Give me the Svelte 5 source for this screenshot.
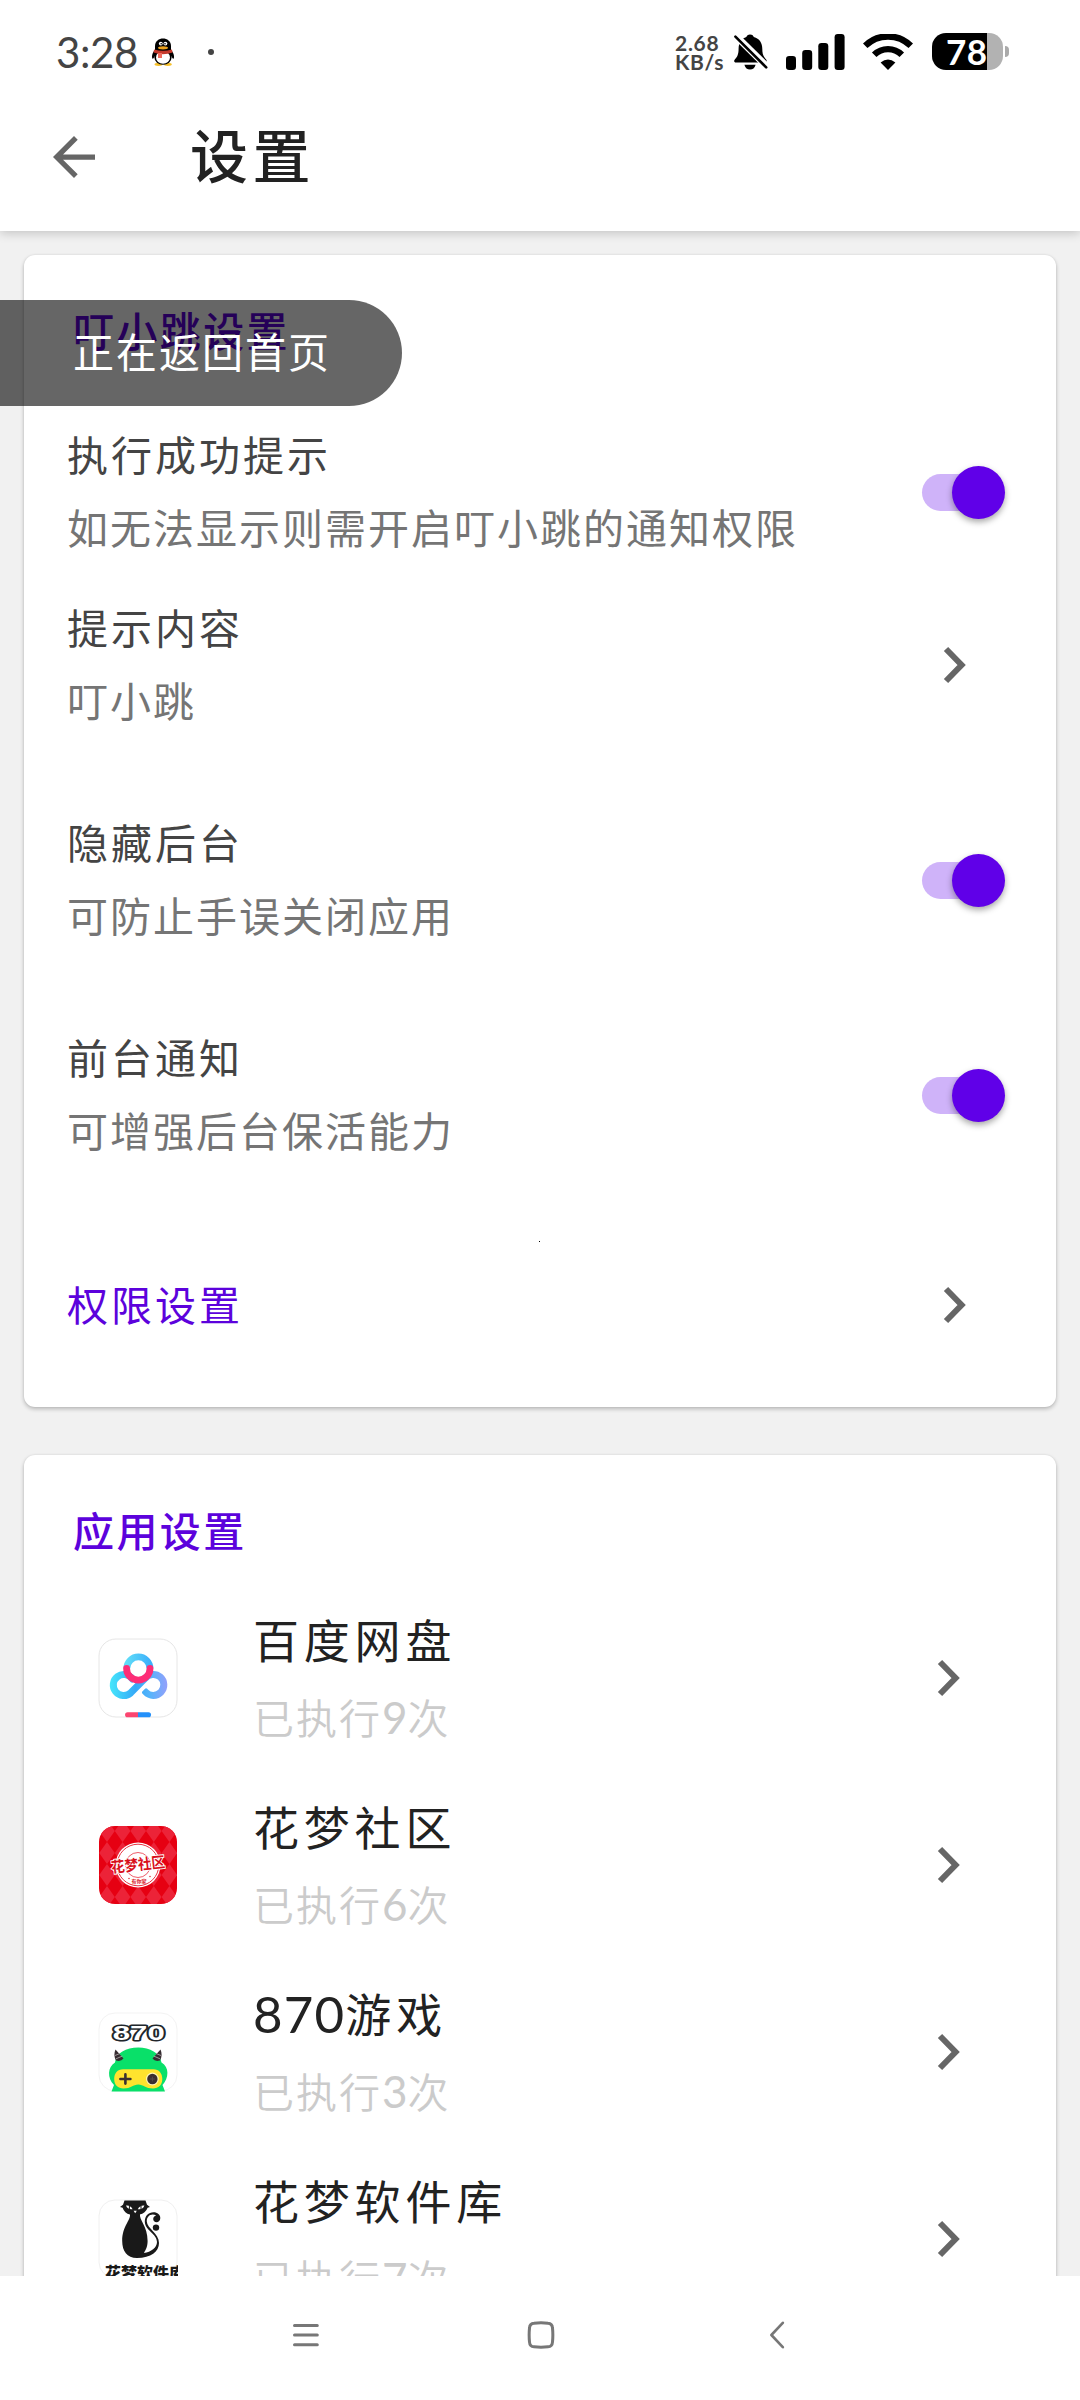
<script>
  const settings = [
    { title: '执行成功提示', sub: '如无法显示则需开启叮小跳的通知权限', kind: 'switch', tight: true },
    { title: '提示内容', sub: '叮小跳', kind: 'link' },
    { title: '隐藏后台', sub: '可防止手误关闭应用', kind: 'switch' },
    { title: '前台通知', sub: '可增强后台保活能力', kind: 'switch' }
  ];
  const apps = [
    { icon: 'pan', num: '', name: '百度网盘', count: 9 },
    { icon: 'community', num: '', name: '花梦社区', count: 6 },
    { icon: 'game', num: '870', name: '游戏', count: 3 },
    { icon: 'cat', num: '', name: '花梦软件库', count: 7 }
  ];
  const diamonds = [];
  for (let r = -1; r < 5; r++) {
    for (let c = -1; c < 6; c++) {
      diamonds.push({ x: c * 15.6 + 8, y: r * 22 + 5 });
    }
  }
</script>

{#snippet chevron()}
  <svg class="chevron" width="24" height="38" viewBox="0 0 24 38">
    <path d="M3 3 L18.6 19 L3 35" fill="none" stroke="#666" stroke-width="6" />
  </svg>
{/snippet}

<div class="screen">
  <div class="status">
    <span class="time">3:28</span>
    <svg class="penguin" width="22" height="28" viewBox="0 0 22 28">
      <ellipse cx="6.5" cy="26.3" rx="4" ry="1.6" fill="#f5c02c" />
      <ellipse cx="15.8" cy="26.3" rx="4" ry="1.6" fill="#f5c02c" />
      <path d="M3 12 C0 15 -.5 19 .4 20.5 C1.2 21.5 2 19 3 18 L19 18 C20 19 21 21.5 21.7 20.5 C22.5 19 22 15 19 12 Z" fill="#000" />
      <ellipse cx="11" cy="19.5" rx="8.6" ry="7.3" fill="#000" />
      <ellipse cx="11" cy="19.5" rx="7" ry="6.2" fill="#fff" />
      <path d="M3 12 V8 C3 -2 19 -2 19 8 V12 Z" fill="#000" />
      <circle cx="8.8" cy="5.6" r="1.9" fill="#fff" />
      <circle cx="13.4" cy="5.6" r="1.9" fill="#fff" />
      <circle cx="9.2" cy="5.8" r=".8" fill="#000" />
      <circle cx="13" cy="5.8" r=".8" fill="#000" />
      <ellipse cx="11" cy="9.8" rx="5" ry="1.6" fill="#eda31f" />
      <path d="M2 11.6 Q11 14 20 11.6 L20.5 14.6 Q11 18 1.6 14.6 Z" fill="#c5392c" />
      <path d="M6 15 H10 V20 H6 Z" fill="#ee6a5c" />
    </svg>
    <span class="dot"></span>
    <div class="speed"><span>2.68</span><span>KB/s</span></div>
    <svg class="bell" width="34" height="36" viewBox="0 0 34 36">
      <path d="M16 .4 C18.4 .4 19.4 1.8 19.8 3 C25.5 4.5 28.3 9 28.3 15 C28.3 21 30 23 32 25.3 C33.4 27.2 32.5 28.6 31 28.6 H2 C0 28.6 -.5 26.8 1 25.3 C3.5 22.6 4.6 20 4.6 14.5 C4.8 8.5 7.5 4.4 12.4 3 C12.8 1.4 14 .4 16 .4 Z" fill="#000" />
      <path d="M10.4 30.8 H21.6 C20.6 34.2 18.8 35.6 16 35.6 C13.2 35.6 11.4 34.2 10.4 30.8 Z" fill="#000" />
      <path d="M0 .2 L34 33.6" stroke="#fff" stroke-width="7" />
      <path d="M1.4 2.6 L32.2 33.4" stroke="#000" stroke-width="2.6" stroke-linecap="round" />
    </svg>
    <svg class="signal" width="60" height="36" viewBox="0 0 60 36">
      <rect x="0" y="22" width="10" height="14" rx="3.2" />
      <rect x="16.2" y="16" width="10" height="20" rx="3.2" />
      <rect x="32.3" y="9" width="10" height="27" rx="3.2" />
      <rect x="48.6" y="0" width="10" height="36" rx="3.2" />
    </svg>
    <svg class="wifi" width="50" height="36" viewBox="0 0 50 36">
      <path d="M2.2 11.8 A32.5 32.5 0 0 1 47.8 11.8" fill="none" stroke="#000" stroke-width="6.4" />
      <path d="M11.2 20.8 A19.6 19.6 0 0 1 38.8 20.8" fill="none" stroke="#000" stroke-width="6.4" />
      <path d="M25 36 L17.6 28.6 Q25 22.6 32.4 28.6 Z" fill="#000" />
    </svg>
    <div class="battery"><div class="cell"><span>78</span></div><i></i></div>
  </div>

  <header class="appbar">
    <svg width="42" height="42" viewBox="4 4 16 16">
      <path d="M20 11H7.83l5.59-5.59L12 4l-8 8 8 8 1.41-1.41L7.83 13H20v-2z" fill="#666" />
    </svg>
    <h1>设置</h1>
  </header>

  <main>
    <section class="card general">
      <h2>叮小跳设置</h2>
      {#each settings as s}
        <div class="row" class:tight={s.tight}>
          <div class="texts">
            <div class="title">{s.title}</div>
            <div class="sub">{s.sub}</div>
          </div>
          {#if s.kind === 'switch'}
            <div class="switch"><i></i></div>
          {:else}
            {@render chevron()}
          {/if}
        </div>
      {/each}
      <div class="speck"></div>
      <div class="row single">
        <div class="texts"><div class="title accent">权限设置</div></div>
        {@render chevron()}
      </div>
    </section>

    <section class="card apps">
      <h2>应用设置</h2>
      {#each apps as a}
        <div class="app">
          <svg class="logo" width="80" height="80" viewBox="-1 -1 80 80">
            {#if a.icon === 'pan'}
              <defs>
                <linearGradient id="panTop" x1="0" y1="0" x2="1" y2="0">
                  <stop offset="0" stop-color="#5fdcf8" /><stop offset="1" stop-color="#3cb0fb" />
                </linearGradient>
                <linearGradient id="panLoop" gradientUnits="userSpaceOnUse" x1="11" y1="46" x2="68" y2="46">
                  <stop offset="0" stop-color="#45e6fb" /><stop offset=".45" stop-color="#35a8f7" />
                  <stop offset=".7" stop-color="#55b4fb" /><stop offset="1" stop-color="#92a0fb" />
                </linearGradient>
              </defs>
              <rect x="0" y="0" width="78" height="78" rx="17" fill="#fff" stroke="#e6e6e6" />
              <path d="M31.6 54 A10.5 10.5 0 1 1 33.4 40 M31.5 54 L46 39.5 A10.5 10.5 0 1 1 46.6 53" fill="none" stroke="url(#panLoop)" stroke-width="7" stroke-linecap="round" />
              <path d="M38 56.6 L48 46.6" stroke="#fff" stroke-width="1.6" />
              <path d="M27.8 29.5 A11.6 11.6 0 0 1 51 29.5" fill="none" stroke="url(#panTop)" stroke-width="6.8" />
              <path d="M27.6 29.4 A11.7 11.7 0 0 0 51 29.4" fill="none" stroke="#fd2d77" stroke-width="6.8" stroke-linecap="round" />
              <path d="M39 73.2 H28.6 A2.5 2.5 0 0 0 28.6 78.3 H39 Z" fill="#fb4570" />
              <path d="M39 73.2 H49.5 A2.5 2.5 0 0 1 49.5 78.3 H39 Z" fill="#2490fa" />
            {:else if a.icon === 'community'}
              <defs><clipPath id="redClip"><rect width="78" height="78" rx="16" /></clipPath></defs>
              <g clip-path="url(#redClip)">
                <rect width="78" height="78" fill="#e60012" />
                {#each diamonds as d}
                  <path d="M0 -11 L7.8 0 L0 11 L-7.8 0 Z" transform="translate({d.x} {d.y})" fill="#ec2338" />
                {/each}
              </g>
              <circle cx="39" cy="39" r="22.5" fill="#fff" />
              <circle cx="39" cy="39" r="20.8" fill="none" stroke="#e83443" stroke-width="1" />
              <circle cx="39" cy="39" r="12.5" fill="none" stroke="#e83443" stroke-width=".8" />
              <g transform="rotate(-6 39 38)">
                <text class="brand" x="39" y="44" text-anchor="middle" textLength="54" lengthAdjust="spacingAndGlyphs">花梦社区</text>
              </g>
              <text class="tiny" x="40" y="56.5" text-anchor="middle" fill="#d8101c">有你家</text>
              <circle cx="30" cy="52.5" r=".7" fill="#d8101c" /><circle cx="51" cy="50.5" r=".7" fill="#d8101c" />
            {:else if a.icon === 'game'}
              <rect width="78" height="78" rx="16" fill="#fff" stroke="#f3f3f3" />
              <text class="outlined" x="39.8" y="27.2" text-anchor="middle" textLength="52" lengthAdjust="spacingAndGlyphs">870</text>
              <path d="M12.5 78.5 L15 72 C8 65 8.5 54 16 49.5 C17 40 27 34.5 39.3 34.5 C51 34.5 61 40 62.5 49.5 C70.5 54 70 65 63.5 72 L66 78.5 Z" fill="#09e069" />
              <path d="M16.5 36.5 L24.5 45.5 Q22 49 17 47.5 Q14 42 16.5 36.5 Z M61.5 36.5 L53.5 45.5 Q56 49 61 47.5 Q64 42 61.5 36.5 Z" fill="#372c31" />
              <path d="M16 42.5 L21 40.5 M17 45.8 L23.4 43 M62 42.5 L57 40.5 M61 45.8 L54.6 43" stroke="#a7a0a0" stroke-width=".9" />
              <path d="M24 56.3 H54.5 C60 56.3 63.3 60.5 63.3 66 C63.3 72 59.5 75.5 54 75.5 C46.5 75.5 44.5 71.5 39.3 71.5 C34 71.5 32 75.5 24.5 75.5 C19 75.5 15.2 72 15.2 66 C15.2 60.5 18.5 56.3 24 56.3 Z" fill="#ffe32e" />
              <path d="M26.4 61.4 V70.6 M21.4 66 H31.4" stroke="#3a2f30" stroke-width="2.6" stroke-linecap="round" />
              <circle cx="53.4" cy="66" r="6.4" fill="#fff6b5" /><circle cx="53.4" cy="66" r="5.2" fill="#3a2f30" />
              <path d="M53.4 63.6 V68.4 M51 66 H55.8" stroke="#544a4b" stroke-width="1" />
            {:else}
              <rect width="78" height="78" rx="16" fill="#fff" stroke="#f0f0f0" />
              <path d="M25.5 .6 H46.5 L48 4.8 L51 7 L48.6 7.8 Q46.5 13.6 40.5 14.4 Q36 16 31 14.4 Q25.5 13.6 23.6 7.8 L21 7 L24 4.8 Z" fill="#191919" />
              <path d="M27 5.5 Q31.5 5 33.6 9.2 Q28.6 9.8 27 5.5 Z M45.4 5.5 Q41 5 38.8 9.2 Q44 9.8 45.4 5.5 Z" fill="#fff" />
              <path d="M30.4 5.8 V9 M42 5.8 V9" stroke="#191919" stroke-width="1" />
              <path d="M34.6 10.8 H37.8 L36.2 13.2 Z" fill="#fff" />
              <path d="M31 14 H41 C40 20 48.6 26 48.6 41 C48.6 47 46.5 50 45 53 C52 52 58 47.5 58 42 C58 33.5 45.8 30.5 45.8 21.5 C45.8 16 49.5 12.3 54.5 12.3 C58.5 12.3 61.3 14.8 61.3 18 C61.3 20.6 59.6 22.2 57.6 22.2 C55.6 22.2 54.2 20.8 54.2 19 C54.2 17.2 55.4 16 57.2 15.6 C52.5 12.8 47.6 16 47.8 21.5 C48 28.5 60 33 60 43 C60 51.5 52 58 38 58 C28 58 23.2 51 23.2 41 C23.2 26 32 20 31 14 Z" fill="#191919" />
              <circle cx="57" cy="27.6" r="3.2" fill="#191919" />
              <text class="blocky" x="6" y="79">花梦软件库</text>
            {/if}
          </svg>
          <div class="app-texts">
            <div class="app-name">{#if a.num}<b>{a.num}</b>{/if}{a.name}</div>
            <div class="app-count">已执行<b>{a.count}</b>次</div>
          </div>
          {@render chevron()}
        </div>
      {/each}
    </section>
  </main>

  <nav>
    <svg width="26" height="28" viewBox="0 0 26 28">
      <path d="M1.5 4.5 H24.3 M1.5 14 H24.3 M1.5 23.7 H24.3" stroke="#777" stroke-width="3" stroke-linecap="round" />
    </svg>
    <svg class="home" width="28" height="28" viewBox="0 0 28 28">
      <path d="M7 2.2 Q14 1.4 21 2.2 Q25.2 2.4 25.5 7 Q26.2 14 25.5 21 Q25.2 25.6 21 25.8 Q14 26.6 7 25.8 Q2.8 25.6 2.5 21 Q1.8 14 2.5 7 Q2.8 2.4 7 2.2 Z" fill="none" stroke="#777" stroke-width="3" />
    </svg>
    <svg class="back" width="16" height="28" viewBox="0 0 16 28">
      <path d="M13.8 1.8 L2.4 14 L13.8 26.2" fill="none" stroke="#777" stroke-width="2.6" stroke-linecap="round" stroke-linejoin="round" />
    </svg>
  </nav>

  <div class="toast">正在返回首页</div>
</div>

<style>
  :global(body) { margin: 0; background: #f1f1f1; }
  .screen {
    position: relative;
    display: flex;
    flex-direction: column;
    width: 1080px;
    height: 2400px;
    overflow: hidden;
    background: #f1f1f1;
    font-family: "Noto Sans CJK SC", sans-serif;
  }
  svg { display: block; flex: none; }
  .status {
    display: flex;
    align-items: center;
    height: 103px;
    box-sizing: border-box;
    padding-left: 56px;
    background: #fff;
    position: relative;
    z-index: 2;
  }
  .time { width: 96px; font: 400 42px/50px Lato, sans-serif; color: #444; letter-spacing: -.4px; }
  .dot { width: 6px; height: 6px; margin-left: 34px; border-radius: 50%; background: #444; }
  .speed {
    display: flex;
    flex-direction: column;
    width: 59px;
    margin-left: 461px;
    padding-top: 1px;
    font: 700 21px/19px Lato, sans-serif;
    color: #444;
    letter-spacing: .7px;
  }
  .signal { margin-left: 18px; }
  .wifi { margin-left: 17px; }
  .battery { display: flex; align-items: center; margin-left: 19px; }
  .cell {
    width: 71px;
    height: 37px;
    border-radius: 14px;
    background: linear-gradient(90deg, #000 55px, #b2b2b2 55px);
    color: #fff;
    font: 700 35px/37px Lato, sans-serif;
  }
  .cell span { display: block; padding-left: 14px; letter-spacing: .5px; }
  .battery i { width: 4px; height: 11px; margin-left: 2px; border-radius: 0 4px 4px 0; background: #aaa; }
  .appbar {
    display: flex;
    align-items: center;
    height: 128px;
    box-sizing: border-box;
    padding: 0 0 20px 53px;
    background: #fff;
    box-shadow: 0 2px 10px rgba(0, 0, 0, .2);
    position: relative;
    z-index: 1;
  }
  h1 { margin: 0 0 8px 95px; font-size: 58px; font-weight: 500; line-height: 70px; letter-spacing: 4.6px; color: #222; }
  main { flex: 1; min-height: 0; overflow: hidden; padding: 24px 24px 0; }
  .card {
    border-radius: 11px;
    background: #fff;
    box-shadow: 0 2px 4px rgba(0, 0, 0, .24), 0 0 2px rgba(0, 0, 0, .08);
    margin-bottom: 48px;
  }
  .general { height: 1152px; }
  h2 { margin: 0; padding: 44px 0 0 49px; font-size: 41px; font-weight: 500; letter-spacing: 2.4px; color: #5c02dc; line-height: 60px; }
  .general h2 { height: 106px; }
  .apps h2 { height: 85px; }
  .row { display: flex; align-items: center; height: 173px; margin-bottom: 42px; padding-left: 43px; }
  .row.tight { margin-bottom: 0; }
  .row.single { height: 100px; margin: 13px 0 0; }
  .texts { flex: 1; line-height: 73px; margin-top: -4px; }
  .title { font-size: 41px; letter-spacing: 3px; color: #444; }
  .title.accent { color: #5c02dc; }
  .sub { font-size: 41px; letter-spacing: 2px; color: #757575; font-weight: 400; }
  .chevron { margin-right: 89px; }
  .switch { display: flex; justify-content: flex-end; align-items: center; width: 75px; height: 37px; margin: 2px 59px 0 0; border-radius: 19px; background: #cfb3f9; }
  .switch i { flex: none; width: 53px; height: 53px; margin-right: -8px; border-radius: 50%; background: #6000e8; box-shadow: 0 3px 6px rgba(0, 0, 0, .35); }
  .speck { width: 1px; height: 1px; margin-left: 515px; margin-top: 60px; background: #000; }
  .row:has(+ .speck) { margin-bottom: 0; }
  .app { display: flex; align-items: center; height: 187px; padding-left: 74px; }
  .app-texts { flex: 1; margin-left: 75px; line-height: 76px; }
  .app-name { height: 77px; margin-top: -1px; font-size: 46px; line-height: 75px; letter-spacing: 4.8px; color: #222; }
  .app-name b { font: 400 51px/60px Lato, sans-serif; letter-spacing: 1.2px; position: relative; top: 1px; }
  .app-count { height: 76px; font-size: 41px; font-weight: 350; letter-spacing: 2px; color: #cbcbcb; }
  .app-count b { font: 400 44px/60px Lato, sans-serif; letter-spacing: 0; }
  .app .chevron { margin-right: 95px; }
  .brand { font: 700 15px "Noto Sans CJK SC", sans-serif; fill: #d8101c; stroke: #fff; stroke-width: 1.8px; paint-order: stroke; }
  .tiny { font: 700 5px "Noto Sans CJK SC", sans-serif; }
  .outlined { font: 900 21px "Liberation Sans", sans-serif; fill: #fff; stroke: #20262b; stroke-width: 3px; stroke-linejoin: round; paint-order: stroke; }
  .blocky { font: 900 16px "Noto Sans CJK SC", sans-serif; fill: #191919; }
  nav { display: flex; height: 124px; box-sizing: border-box; padding: 45px 0 0 293px; background: #fff; flex: none; }
  .home { margin-left: 208px; }
  .back { margin-left: 214px; }
  .toast {
    position: absolute;
    left: 0;
    top: 300px;
    z-index: 3;
    width: 402px;
    height: 106px;
    box-sizing: border-box;
    padding-left: 73px;
    border-radius: 0 53px 53px 0;
    background: rgba(0, 0, 0, .6);
    color: #fff;
    font-size: 41px;
    line-height: 100px;
    letter-spacing: 2px;
    white-space: nowrap;
  }
</style>
